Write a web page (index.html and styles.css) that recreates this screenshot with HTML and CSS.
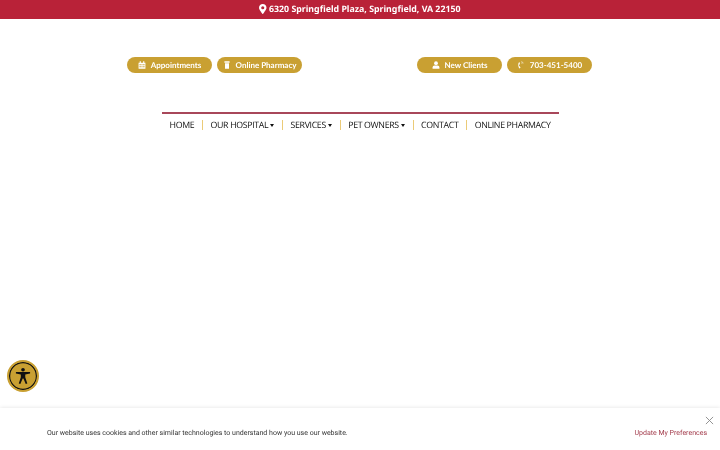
FILE: index.html
```html
<!DOCTYPE html>
<html lang="en">
<head>
    <meta charset="UTF-8">
    <title>Veterinary Hospital</title>
    <link rel="stylesheet" href="styles.css">
</head>
<body>
    <div class="top-bar">
        <svg class="pin-icon" viewBox="0 0 384 512"><path d="M172 502C27 291 0 253 0 192 0 86 86 0 192 0s192 86 192 192c0 61-27 99-172 310-10 14-30 14-40 0zm20-230a80 80 0 1 0 0-160 80 80 0 0 0 0 160z"/></svg>
        <span>6320 Springfield Plaza, Springfield, VA 22150</span>
    </div>

    <div class="actions">
        <div class="action-group">
            <a class="pill">
                <svg class="pill-icon" viewBox="0 0 14 14"><path d="M1 3h12v10.500H1zM3 .5h2V3H3zM9 .5h2V3H9z"/><path class="cut" d="M2.500 5.500h2.500v2H2.500zM6 5.500h2v2H6zM9 5.500h2.500v2H9zM2.500 9h2.500v2H2.500zM6 9h2v2H6zM9 9h2.500v2H9z"/></svg>
                <span>Appointments</span>
            </a>
            <a class="pill">
                <svg class="pill-icon" viewBox="0 0 14 14"><path d="M2.500 .5h9v2.500h-9zM3.500 3.800h7v9.700h-7z"/></svg>
                <span>Online Pharmacy</span>
            </a>
        </div>
        <div class="action-group">
            <a class="pill">
                <svg class="pill-icon" viewBox="0 0 14 14"><circle cx="7" cy="3.800" r="3.300"/><path d="M1 13.500v-2c0-2.200 1.500-3.500 3.500-3.500h5c2 0 3.500 1.300 3.500 3.500v2z"/></svg>
                <span>New Clients</span>
            </a>
            <a class="pill">
                <svg class="pill-icon" viewBox="0 0 14 14"><path d="M5 2 2.800 3C1.800 6.500 2 9.500 4 13l2.200-1-1.300-3-1 .3c-.4-1.200-.4-2.200 0-3.300l1 .2z"/><path class="wave" d="M7.500 3c.8.300 1.300.8 1.500 1.600M7.700 1c1.600.3 2.800 1.500 3.200 3.100"/></svg>
                <span>703-451-5400</span>
            </a>
        </div>
    </div>

    <nav class="main-nav">
        <a class="nav-link">HOME</a>
        <span class="nav-sep"></span>
        <a class="nav-link">OUR HOSPITAL<span class="caret"></span></a>
        <span class="nav-sep"></span>
        <a class="nav-link">SERVICES<span class="caret"></span></a>
        <span class="nav-sep"></span>
        <a class="nav-link">PET OWNERS<span class="caret"></span></a>
        <span class="nav-sep"></span>
        <a class="nav-link">CONTACT</a>
        <span class="nav-sep"></span>
        <a class="nav-link">ONLINE PHARMACY</a>
    </nav>

    <button class="a11y-btn" aria-label="Accessibility">
        <svg viewBox="0 0 24 24"><circle cx="12" cy="4.500" r="2.200"/><path d="M3.500 7.200h17v1.900l-5.800 1v3.400l2.500 7.600-1.900.6-2.800-6.700h-.9l-2.800 6.700-1.900-.6 2.500-7.600v-3.400l-5.900-1z"/></svg>
    </button>

    <div class="cookie-bar">
        <p class="cookie-text">Our website uses cookies and other similar technologies to understand how you use our website.</p>
        <a class="cookie-link">Update My Preferences</a>
        <svg class="cookie-close" viewBox="0 0 10 10"><path d="M1 1l8 8M9 1l-8 8"/></svg>
    </div>
</body>
</html>
```

FILE: styles.css
```css
* {
    margin: 0;
    padding: 0;
    box-sizing: border-box;
}

body {
    font-family: 'Lato', sans-serif;
    text-rendering: geometricPrecision;
    background: #fff;
    height: 450px;
    overflow: hidden;
    position: relative;
    color: #111;
}

.top-bar {
    height: 18.500px;
    background: #b92238;
    color: #fff;
    display: flex;
    justify-content: center;
    align-items: center;
    gap: 2px;
    font-family: 'Noto Sans', sans-serif;
    font-size: 8.800px;
    font-weight: 700;
}

.top-bar span,
.pill span,
.nav-link,
.cookie-text,
.cookie-link {
    will-change: opacity;
}

.pin-icon {
    width: 7.500px;
    height: 10px;
    fill: #fff;
}

.actions {
    width: 466px;
    margin: 38.500px auto 0;
    padding-right: 1px;
    display: flex;
    justify-content: space-between;
}

.action-group {
    display: flex;
    gap: 5px;
}

.pill {
    width: 85px;
    height: 16px;
    background: #c9a032;
    border-radius: 8px;
    color: #fff;
    display: flex;
    justify-content: center;
    align-items: center;
    gap: 5px;
    font-size: 8px;
    font-weight: 700;
}

.pill-icon {
    width: 8px;
    height: 8px;
    fill: #fff;
}

.pill-icon .cut {
    fill: #c9a032;
}

.pill-icon .wave {
    fill: none;
    stroke: #fff;
    stroke-width: 1;
}

.main-nav {
    width: 397px;
    margin: 39px auto 0;
    border-top: 2px solid #a8475a;
    padding-top: 6px;
    display: flex;
    justify-content: center;
}

.nav-link {
    padding: 0 8px;
    font-family: 'Open Sans', sans-serif;
    font-size: 8.800px;
    font-weight: 500;
    letter-spacing: -0.35px;
    line-height: 10px;
    height: 10px;
    white-space: nowrap;
    display: flex;
    align-items: center;
}

.nav-sep {
    width: 1px;
    height: 10px;
    background: #ebcb78;
}

.caret {
    margin-left: 2px;
    border-left: 2.500px solid transparent;
    border-right: 2.500px solid transparent;
    border-top: 3px solid #111;
}

.a11y-btn {
    position: absolute;
    left: 6.500px;
    top: 359.500px;
    width: 32px;
    height: 32px;
    border-radius: 50%;
    background: #c9a032;
    border: 2px solid #c9a032;
    box-shadow: inset 0 0 0 1.200px #111;
    display: flex;
    justify-content: center;
    align-items: center;
}

.a11y-btn svg {
    width: 20px;
    height: 20px;
    fill: #111;
}

.cookie-bar {
    position: absolute;
    left: 0;
    right: 0;
    bottom: 0;
    height: 42px;
    background: #fff;
    box-shadow: 0 0 4px rgba(0, 0, 0, 0.12);
    display: flex;
    justify-content: space-between;
    align-items: center;
    padding: 7px 13px 0 47px;
    font-family: 'Roboto', sans-serif;
    font-size: 7px;
}

.cookie-text {
    color: #333;
}

.cookie-link {
    color: #a33c4c;
}

.cookie-close {
    position: absolute;
    top: 8px;
    right: 6px;
    width: 9px;
    height: 9px;
    fill: none;
    stroke: #888;
    stroke-width: 1;
}
```
